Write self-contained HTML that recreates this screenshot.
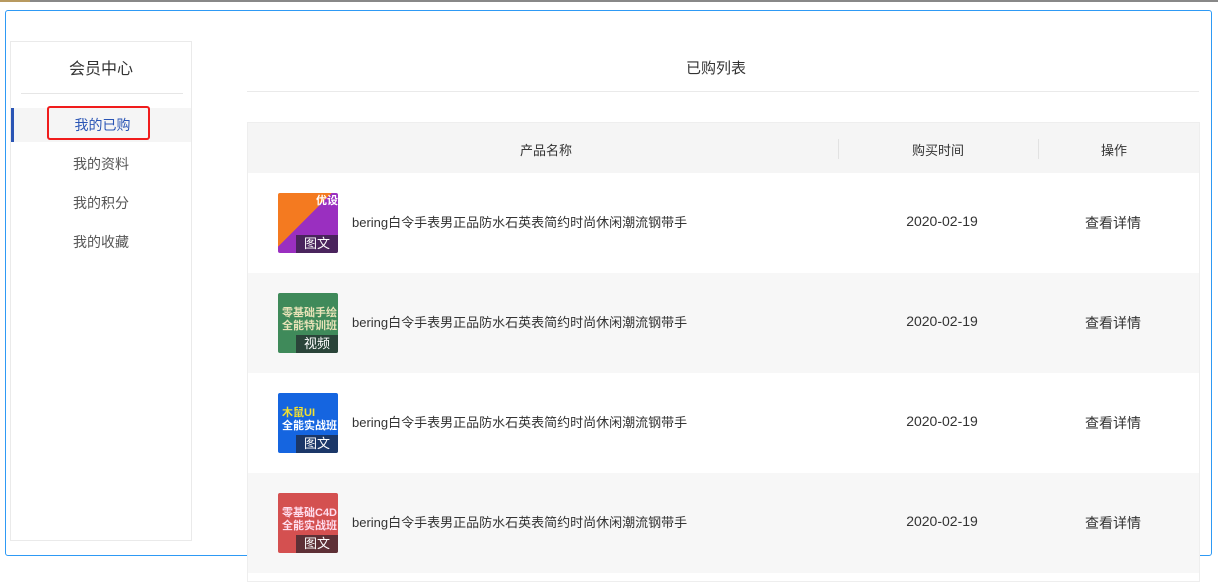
<!DOCTYPE html><html><head><meta charset="utf-8"><style>
*{margin:0;padding:0;box-sizing:border-box}
body{width:1218px;height:563px;overflow:hidden;background:#fff;font-family:"Liberation Sans","Noto Sans CJK SC",sans-serif;color:#333;position:relative}
.top{position:absolute;left:0;top:0;width:1218px;height:2px;background:#888}
.top2{position:absolute;left:0;top:0;width:30px;height:2px;background:#b89a60}
.box{position:absolute;left:5px;top:10px;width:1207px;height:546px;border:1px solid #2e9af5;border-radius:3px}
.side{position:absolute;left:10px;top:41px;width:182px;height:500px;border:1px solid #eaeaea;background:#fff}
.side h3{font-weight:normal;font-size:16px;text-align:center;position:absolute;top:13px;width:100%;color:#333}
.side .dv{position:absolute;left:10px;top:51px;width:162px;height:1px;background:#e6e6e6}
.it{position:absolute;left:0;width:180px;height:34px;line-height:34px;text-align:center;font-size:14px;color:#555}
.act{background:#f5f5f5;color:#2a55b5;border-left:3px solid #2a55b5}
.red{position:absolute;left:47px;top:106px;width:103px;height:34px;border:2px solid #f01c1c;border-radius:3px}
.mt{position:absolute;left:247px;top:57px;width:938px;text-align:center;font-size:15px}
.mdv{position:absolute;left:247px;top:91px;width:952px;height:1px;background:#eaeaea}
.tbl{position:absolute;left:247px;top:122px;width:953px;height:460px;border:1px solid #eee}
.hd{height:50px;background:#f5f5f5;position:relative;font-size:13px}
.hd span,.row span{position:absolute;text-align:center}
.row{height:100px;position:relative;font-size:14px}
.row:nth-child(odd){background:#f7f7f7}
.sep{position:absolute;top:16px;width:1px;height:20px;background:#e2e2e2}
.th{position:absolute;left:30px;top:20px;width:60px;height:60px;border-radius:2px;overflow:hidden}
.th i{position:absolute;right:0;bottom:0;width:42px;height:18px;background:rgba(30,30,40,.65);color:#fff;font-style:normal;font-size:13px;line-height:18px;text-align:center}
.th b{position:absolute;left:4px;top:14px;font-size:11px;line-height:13px;font-weight:bold;white-space:nowrap}
.nm{left:104px;top:39px;font-size:13px}
</style></head><body>
<div class="top"></div><div class="top2"></div>
<div class="box"></div>
<div class="side"><h3>会员中心</h3><div class="dv"></div>
<div class="it act" style="top:66px">我的已购</div>
<div class="it" style="top:105px">我的资料</div>
<div class="it" style="top:144px">我的积分</div>
<div class="it" style="top:183px">我的收藏</div></div>
<div class="red"></div>
<div class="mt">已购列表</div><div class="mdv"></div>
<div class="tbl">
<div class="hd"><span style="left:0;width:596px;top:17px">产品名称</span><div class="sep" style="left:590px"></div><span style="left:590px;width:200px;top:17px">购买时间</span><div class="sep" style="left:790px"></div><span style="left:790px;width:152px;top:17px">操作</span></div>
<div class="row"><div class="th" style="background:linear-gradient(135deg,#f47a20 0 45%,#9a2fc0 45%)"><b style="left:38px;top:2px;color:#fff">优设</b><i>图文</i></div><span class="nm">bering白令手表男正品防水石英表简约时尚休闲潮流钢带手</span><span style="left:594px;width:200px;top:40px">2020-02-19</span><span style="left:790px;width:150px;top:40px">查看详情</span></div>
<div class="row"><div class="th" style="background:#3f8a5a"><b style="color:#e8e3b8">零基础手绘<br>全能特训班</b><i>视频</i></div><span class="nm">bering白令手表男正品防水石英表简约时尚休闲潮流钢带手</span><span style="left:594px;width:200px;top:40px">2020-02-19</span><span style="left:790px;width:150px;top:40px">查看详情</span></div>
<div class="row"><div class="th" style="background:#1565e0"><b style="color:#f2e030">木鼠UI<br><span style="position:static;color:#fff">全能实战班</span></b><i>图文</i></div><span class="nm">bering白令手表男正品防水石英表简约时尚休闲潮流钢带手</span><span style="left:594px;width:200px;top:40px">2020-02-19</span><span style="left:790px;width:150px;top:40px">查看详情</span></div>
<div class="row"><div class="th" style="background:#d45050"><b style="color:#fde">零基础C4D<br>全能实战班</b><i>图文</i></div><span class="nm">bering白令手表男正品防水石英表简约时尚休闲潮流钢带手</span><span style="left:594px;width:200px;top:40px">2020-02-19</span><span style="left:790px;width:150px;top:40px">查看详情</span></div>
</div>
</body></html>
